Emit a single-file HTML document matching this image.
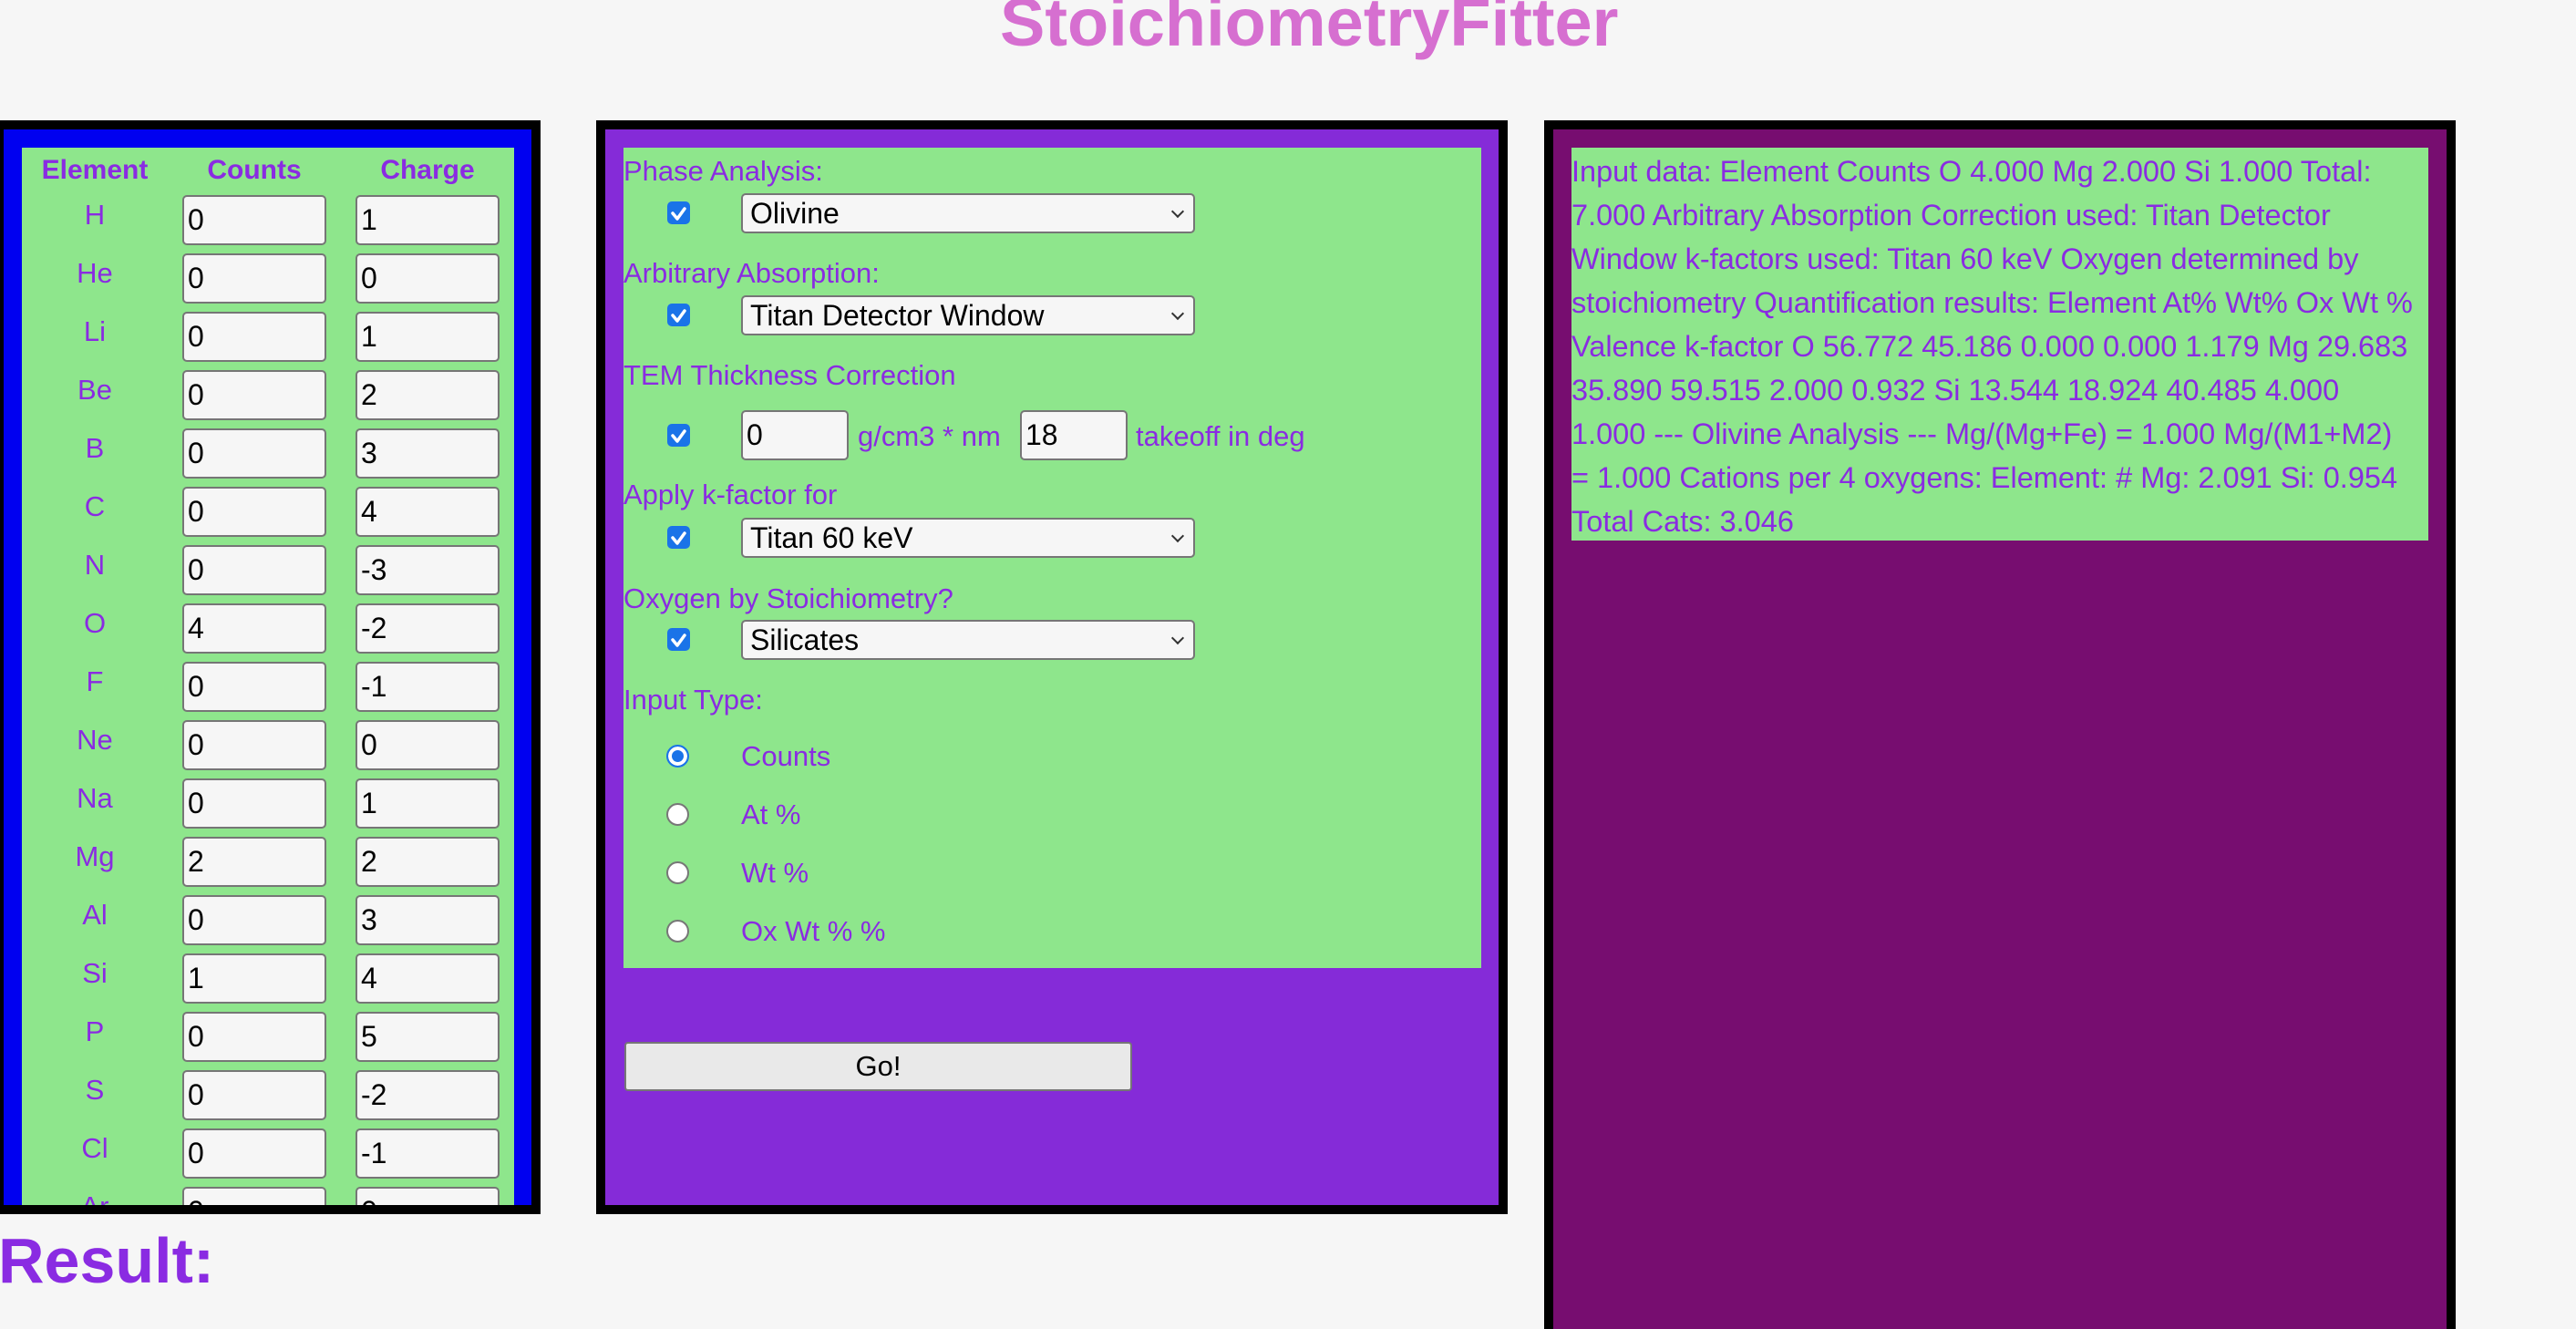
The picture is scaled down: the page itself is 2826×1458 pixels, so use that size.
<!DOCTYPE html>
<html><head><meta charset="utf-8"><style>
*{box-sizing:border-box;margin:0;padding:0}
html,body{width:2826px;height:1458px;overflow:hidden;background:#f6f6f6;font-family:"Liberation Sans",Arial,sans-serif}
#wrap{position:relative;width:2826px;height:1458px;overflow:hidden}
.a{position:absolute}
.t{color:#8a2be2;font-size:31px;line-height:36px;white-space:nowrap}
.inp{position:absolute;background:#f6f6f6;border:2px solid #767676;border-radius:5px;color:#000;font-size:32px;line-height:51px;padding-left:4px}
.sel{position:absolute;background:#f6f6f6;border:2px solid #767676;border-radius:5px;color:#000;font-size:32px;line-height:40px;padding-left:8px;width:498px;height:44px}
.sel:after{content:"";position:absolute;right:12px;top:13px;width:8px;height:8px;border-right:2px solid #333;border-bottom:2px solid #333;transform:rotate(45deg)}
.cb{position:absolute;width:25px;height:25px;background:#1a73e8;border-radius:5px}
.rd{position:absolute;width:25px;height:25px;border-radius:50%;background:#fff;border:2px solid #777}
.rd.on{border:2px solid #1a73e8;background:#1a73e8;box-shadow:inset 0 0 0 4px #fff}
</style></head><body><div id="wrap">
<div class="a" style="left:1097px;top:-20px;font-size:74px;font-weight:bold;color:#d66fd0;line-height:90px;white-space:nowrap">StoichiometryFitter</div>

<div class="a" style="left:-6px;top:132px;width:599px;height:1200px;background:#0000f0;border:10px solid #000"></div>

<div class="a" style="left:654px;top:132px;width:1000px;height:1200px;background:#852bd8;border:10px solid #000"></div>
<div class="a" style="left:684px;top:162px;width:941px;height:900px;background:#8ee68c"></div>
<div class="a t" style="left:684px;top:170px">Phase Analysis:</div>
<div class="cb" style="left:732px;top:221px"></div>
<div class="sel" style="left:813px;top:212px">Olivine</div>
<div class="a t" style="left:684px;top:282px">Arbitrary Absorption:</div>
<div class="cb" style="left:732px;top:333px"></div>
<div class="sel" style="left:813px;top:324px">Titan Detector Window</div>
<div class="a t" style="left:684px;top:394px">TEM Thickness Correction</div>
<div class="cb" style="left:732px;top:465px"></div>
<div class="inp" style="left:813px;top:450px;width:118px;height:55px">0</div>
<div class="a t" style="left:941px;top:461px">g/cm3 * nm</div>
<div class="inp" style="left:1119px;top:450px;width:118px;height:55px">18</div>
<div class="a t" style="left:1246px;top:461px">takeoff in deg</div>
<div class="a t" style="left:684px;top:525px">Apply k-factor for</div>
<div class="cb" style="left:732px;top:577px"></div>
<div class="sel" style="left:813px;top:568px">Titan 60 keV</div>
<div class="a t" style="left:684px;top:639px">Oxygen by Stoichiometry?</div>
<div class="cb" style="left:732px;top:689px"></div>
<div class="sel" style="left:813px;top:680px">Silicates</div>
<div class="a t" style="left:684px;top:750px">Input Type:</div>
<div class="rd on" style="left:731px;top:817px"></div><div class="a t" style="left:813px;top:812px">Counts</div>
<div class="rd" style="left:731px;top:881px"></div><div class="a t" style="left:813px;top:876px">At %</div>
<div class="rd" style="left:731px;top:945px"></div><div class="a t" style="left:813px;top:940px">Wt %</div>
<div class="rd" style="left:731px;top:1009px"></div><div class="a t" style="left:813px;top:1004px">Ox Wt % %</div>
<div class="a" style="left:685px;top:1143px;width:557px;height:54px;background:#e9e9e9;border:2px solid #767676;border-radius:4px;font-size:31px;line-height:50px;text-align:center;color:#000">Go!</div>

<div class="a" style="left:1694px;top:132px;width:1000px;height:1326px;background:#770d70;border:10px solid #000;border-bottom:0"></div>
<div class="a" style="left:1724px;top:162px;width:940px;height:431px;background:#8ee68c;color:#8a2be2;font-size:32.5px;line-height:48px;padding-top:2px;white-space:nowrap;overflow:hidden">
Input data: Element Counts O 4.000 Mg 2.000 Si 1.000 Total:<br>
7.000 Arbitrary Absorption Correction used: Titan Detector<br>
Window k-factors used: Titan 60 keV Oxygen determined by<br>
stoichiometry Quantification results: Element At% Wt% Ox Wt %<br>
Valence k-factor O 56.772 45.186 0.000 0.000 1.179 Mg 29.683<br>
35.890 59.515 2.000 0.932 Si 13.544 18.924 40.485 4.000<br>
1.000 --- Olivine Analysis --- Mg/(Mg+Fe) = 1.000 Mg/(M1+M2)<br>
= 1.000 Cations per 4 oxygens: Element: # Mg: 2.091 Si: 0.954<br>
Total Cats: 3.046</div>

<div class="a" style="left:-2px;top:1338px;font-size:70px;font-weight:bold;color:#8a2be2;line-height:90px;white-space:nowrap">Result:</div>

<div class="a" style="left:24px;top:162px;width:540px;height:1160px;background:#8ee68c;overflow:hidden">
<div class="a t" style="left:0;width:160px;text-align:center;top:7px;font-weight:bold;font-size:30px">Element</div>
<div class="a t" style="left:176px;width:158px;text-align:center;top:7px;font-weight:bold;font-size:30px">Counts</div>
<div class="a t" style="left:366px;width:158px;text-align:center;top:7px;font-weight:bold;font-size:30px">Charge</div>
<div class="a t" style="left:0;width:160px;text-align:center;top:56px">H</div><div class="inp" style="left:176px;top:52px;width:158px;height:55px">0</div><div class="inp" style="left:366px;top:52px;width:158px;height:55px">1</div>
<div class="a t" style="left:0;width:160px;text-align:center;top:120px">He</div><div class="inp" style="left:176px;top:116px;width:158px;height:55px">0</div><div class="inp" style="left:366px;top:116px;width:158px;height:55px">0</div>
<div class="a t" style="left:0;width:160px;text-align:center;top:184px">Li</div><div class="inp" style="left:176px;top:180px;width:158px;height:55px">0</div><div class="inp" style="left:366px;top:180px;width:158px;height:55px">1</div>
<div class="a t" style="left:0;width:160px;text-align:center;top:248px">Be</div><div class="inp" style="left:176px;top:244px;width:158px;height:55px">0</div><div class="inp" style="left:366px;top:244px;width:158px;height:55px">2</div>
<div class="a t" style="left:0;width:160px;text-align:center;top:312px">B</div><div class="inp" style="left:176px;top:308px;width:158px;height:55px">0</div><div class="inp" style="left:366px;top:308px;width:158px;height:55px">3</div>
<div class="a t" style="left:0;width:160px;text-align:center;top:376px">C</div><div class="inp" style="left:176px;top:372px;width:158px;height:55px">0</div><div class="inp" style="left:366px;top:372px;width:158px;height:55px">4</div>
<div class="a t" style="left:0;width:160px;text-align:center;top:440px">N</div><div class="inp" style="left:176px;top:436px;width:158px;height:55px">0</div><div class="inp" style="left:366px;top:436px;width:158px;height:55px">-3</div>
<div class="a t" style="left:0;width:160px;text-align:center;top:504px">O</div><div class="inp" style="left:176px;top:500px;width:158px;height:55px">4</div><div class="inp" style="left:366px;top:500px;width:158px;height:55px">-2</div>
<div class="a t" style="left:0;width:160px;text-align:center;top:568px">F</div><div class="inp" style="left:176px;top:564px;width:158px;height:55px">0</div><div class="inp" style="left:366px;top:564px;width:158px;height:55px">-1</div>
<div class="a t" style="left:0;width:160px;text-align:center;top:632px">Ne</div><div class="inp" style="left:176px;top:628px;width:158px;height:55px">0</div><div class="inp" style="left:366px;top:628px;width:158px;height:55px">0</div>
<div class="a t" style="left:0;width:160px;text-align:center;top:696px">Na</div><div class="inp" style="left:176px;top:692px;width:158px;height:55px">0</div><div class="inp" style="left:366px;top:692px;width:158px;height:55px">1</div>
<div class="a t" style="left:0;width:160px;text-align:center;top:760px">Mg</div><div class="inp" style="left:176px;top:756px;width:158px;height:55px">2</div><div class="inp" style="left:366px;top:756px;width:158px;height:55px">2</div>
<div class="a t" style="left:0;width:160px;text-align:center;top:824px">Al</div><div class="inp" style="left:176px;top:820px;width:158px;height:55px">0</div><div class="inp" style="left:366px;top:820px;width:158px;height:55px">3</div>
<div class="a t" style="left:0;width:160px;text-align:center;top:888px">Si</div><div class="inp" style="left:176px;top:884px;width:158px;height:55px">1</div><div class="inp" style="left:366px;top:884px;width:158px;height:55px">4</div>
<div class="a t" style="left:0;width:160px;text-align:center;top:952px">P</div><div class="inp" style="left:176px;top:948px;width:158px;height:55px">0</div><div class="inp" style="left:366px;top:948px;width:158px;height:55px">5</div>
<div class="a t" style="left:0;width:160px;text-align:center;top:1016px">S</div><div class="inp" style="left:176px;top:1012px;width:158px;height:55px">0</div><div class="inp" style="left:366px;top:1012px;width:158px;height:55px">-2</div>
<div class="a t" style="left:0;width:160px;text-align:center;top:1080px">Cl</div><div class="inp" style="left:176px;top:1076px;width:158px;height:55px">0</div><div class="inp" style="left:366px;top:1076px;width:158px;height:55px">-1</div>
<div class="a t" style="left:0;width:160px;text-align:center;top:1144px">Ar</div><div class="inp" style="left:176px;top:1140px;width:158px;height:55px">0</div><div class="inp" style="left:366px;top:1140px;width:158px;height:55px">0</div>
</div>

<svg class="a" style="left:0;top:0" width="2826" height="1458">
<g fill="none" stroke="#fff" stroke-width="3.5" stroke-linecap="round" stroke-linejoin="round">
<path d="M738 234 l5 6 l8 -11"/>
<path d="M738 346 l5 6 l8 -11"/>
<path d="M738 478 l5 6 l8 -11"/>
<path d="M738 590 l5 6 l8 -11"/>
<path d="M738 702 l5 6 l8 -11"/>
</g></svg>
</div></body></html>
